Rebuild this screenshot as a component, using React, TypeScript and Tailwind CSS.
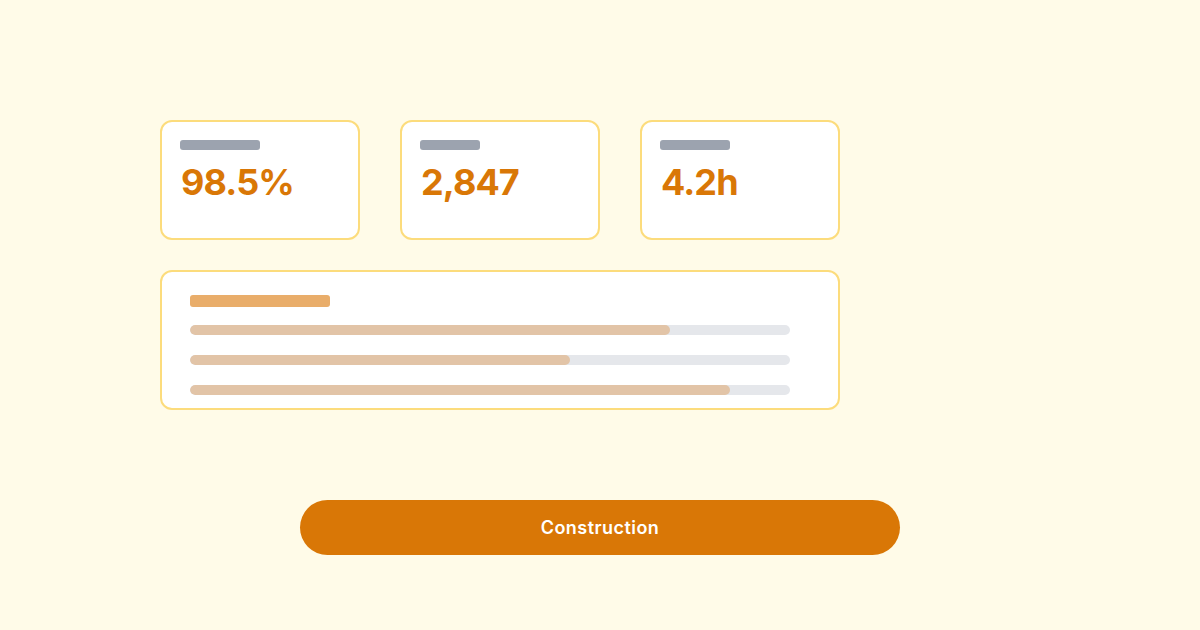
import React from "react";

const stats = [
  { w: "w-[80px]", v: "98.5%" },
  { w: "w-[60px]", v: "2,847" },
  { w: "w-[70px]", v: "4.2h" },
];

const bars = [80, 63.33, 90];

export default function App() {
  return (
    <div
      className="w-[1200px] h-[630px] bg-[#fffbe8] pt-[120px] pl-[160px] box-border overflow-hidden"
      style={{ fontFamily: "Inter, 'Noto Sans', sans-serif" }}
    >
      <div className="grid grid-cols-[200px_200px_200px] gap-[40px]">
        {stats.map((s, i) => (
          <div
            key={i}
            className="h-[120px] bg-white border-2 border-[#fcdc7c] rounded-xl pt-[18px] pl-[19px] box-border"
          >
            <div className={`${s.w} h-[10px] rounded-[3px] bg-[#9ca3af] -ml-[1px]`} />
            <div className="mt-[12px] text-[36px] leading-[40px] font-bold tracking-tight text-[#d97706]">
              {s.v}
            </div>
          </div>
        ))}
      </div>
      <div className="mt-[30px] w-[680px] h-[140px] bg-white border-2 border-[#fcdc7c] rounded-xl pt-[23px] pl-[28px] box-border flex flex-col">
        <div className="w-[140px] h-[12px] rounded-[3px] bg-[#e9ad6a]" />
        <div className="mt-[18px] flex flex-col gap-[20px]">
          {bars.map((p, i) => (
            <div key={i} className="w-[600px] h-[10px] rounded-full bg-[#e5e7eb] overflow-hidden">
              <div className="h-full rounded-full bg-[#e2c4a7]" style={{ width: `${p}%` }} />
            </div>
          ))}
        </div>
      </div>
      <div className="mt-[90px] ml-[140px] w-[600px] h-[55px] rounded-full bg-[#d97706] flex items-center justify-center text-white text-[18px] font-semibold tracking-wide">
        Construction
      </div>
    </div>
  );
}
